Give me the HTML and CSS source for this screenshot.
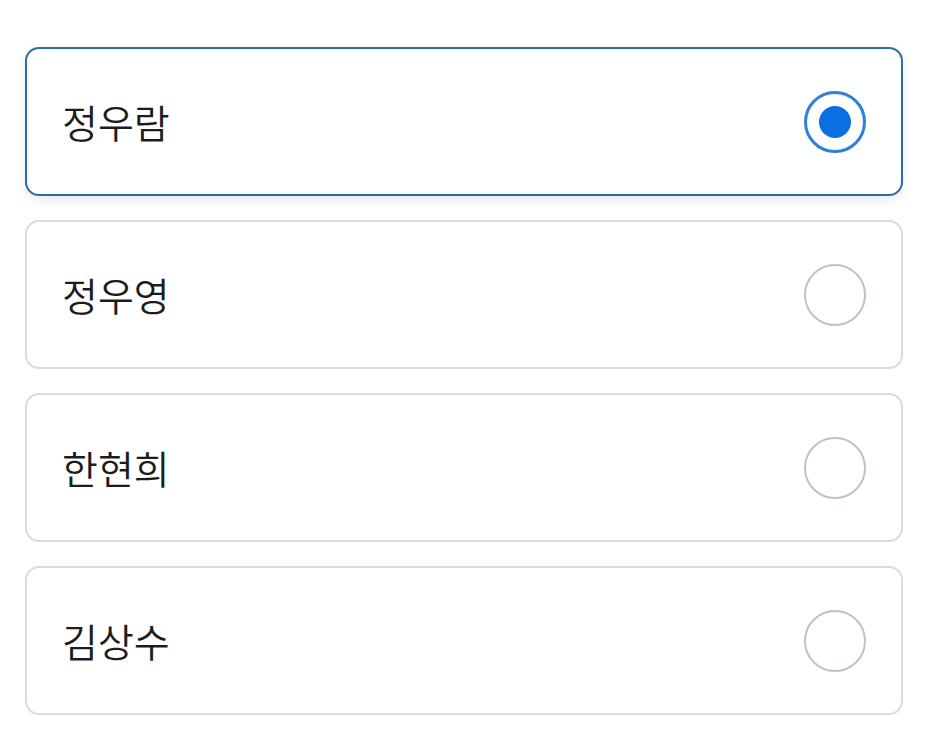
FILE: index.html
```html
<!DOCTYPE html>
<html lang="ko">
<head>
<meta charset="utf-8">
<link rel="stylesheet" href="styles.css">
</head>
<body>
<div class="list">
  <label class="card selected">
    <span class="name">정우람</span>
    <span class="radio"><span class="dot"></span></span>
  </label>
  <label class="card">
    <span class="name">정우영</span>
    <span class="radio"></span>
  </label>
  <label class="card">
    <span class="name">한현희</span>
    <span class="radio"></span>
  </label>
  <label class="card">
    <span class="name">김상수</span>
    <span class="radio"></span>
  </label>
</div>
</body>
</html>
```
FILE: styles.css
```css
html, body {
  margin: 0;
  background: #ffffff;
}
body {
  padding: 47px 31px 0 25px;
  font-family: "Noto Sans CJK KR", "Noto Sans", sans-serif;
}
.list {
  display: flex;
  flex-direction: column;
  gap: 24px;
}
.card {
  box-sizing: border-box;
  height: 149px;
  border: 2px solid #d9dcde;
  border-radius: 14px;
  display: flex;
  align-items: center;
  justify-content: space-between;
  padding: 0 35px 0 35px;
  background: #fff;
}
.card.selected {
  border-color: #2c6caa;
  box-shadow: 0 4px 10px rgba(40, 90, 140, 0.12);
}
.name {
  font-size: 39px;
  font-weight: 350;
  color: #1c1c1c;
  letter-spacing: 0;
  line-height: 1;
}
.radio {
  box-sizing: border-box;
  width: 62px;
  height: 62px;
  border-radius: 50%;
  border: 2px solid #bcc3c7;
  display: flex;
  align-items: center;
  justify-content: center;
}
.selected .radio {
  border: 3px solid #2f80d6;
}
.dot {
  width: 32px;
  height: 32px;
  border-radius: 50%;
  background: #0b6fe2;
}
```
